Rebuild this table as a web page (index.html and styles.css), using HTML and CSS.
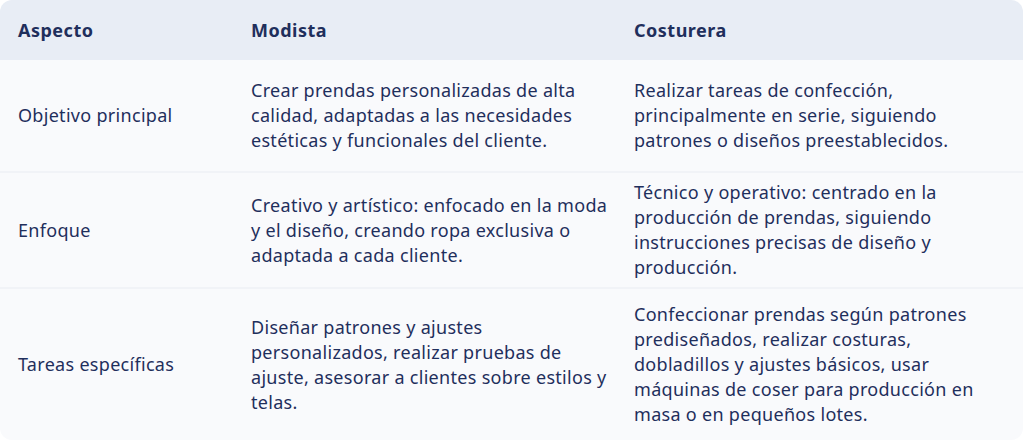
FILE: index.html
```html
<!DOCTYPE html>
<html lang="es">
<head>
<meta charset="utf-8">
<link rel="stylesheet" href="styles.css">
</head>
<body>
<table class="compare">
  <thead>
    <tr class="head-row">
      <th class="c1">Aspecto</th>
      <th class="c2">Modista</th>
      <th class="c3">Costurera</th>
    </tr>
  </thead>
  <tbody>
    <tr class="row r1">
      <td>Objetivo principal</td>
      <td class="mid">Crear prendas personalizadas de alta calidad, adaptadas a las necesidades estéticas y funcionales del cliente.</td>
      <td>Realizar tareas de confección, principalmente en serie, siguiendo patrones o diseños preestablecidos.</td>
    </tr>
    <tr class="row r2">
      <td>Enfoque</td>
      <td class="mid">Creativo y artístico: enfocado en la moda y el diseño, creando ropa exclusiva o adaptada a cada cliente.</td>
      <td>Técnico y operativo: centrado en la producción de prendas, siguiendo instrucciones precisas de diseño y producción.</td>
    </tr>
    <tr class="row r3">
      <td>Tareas específicas</td>
      <td class="mid">Diseñar patrones y ajustes personalizados, realizar pruebas de ajuste, asesorar a clientes sobre estilos y telas.</td>
      <td>Confeccionar prendas según patrones prediseñados, realizar costuras, dobladillos y ajustes básicos, usar máquinas de coser para producción en masa o en pequeños lotes.</td>
    </tr>
  </tbody>
</table>
</body>
</html>
```
FILE: styles.css
```css
html, body {
  margin: 0;
  padding: 0;
  background: #ffffff;
}
body {
  font-family: "Noto Sans", Lato, sans-serif;
  color: #1f2f5c;
}
.compare {
  width: 1023px;
  border-collapse: separate;
  border-spacing: 0;
  border-radius: 12px;
  overflow: hidden;
  table-layout: fixed;
  font-size: 18px;
  line-height: 25px;
  letter-spacing: 0.3px;
}
.c1 { width: 233px; }
.c2 { width: 383px; }
th {
  background: #e8edf5;
  height: 60px;
  padding: 0 18px;
  text-align: left;
  font-weight: 700;
  letter-spacing: 0.5px;
  box-sizing: border-box;
  vertical-align: middle;
}
td {
  background: #f9fafc;
  padding: 0 18px;
  vertical-align: middle;
  text-align: left;
  box-sizing: border-box;
}
td.mid { padding-right: 4px; }
.r1 td { height: 113px; border-bottom: 2px solid #f1f3f7; }
.r2 td { height: 116px; border-bottom: 2px solid #f1f3f7; }
.r3 td { height: 151px; }
```
